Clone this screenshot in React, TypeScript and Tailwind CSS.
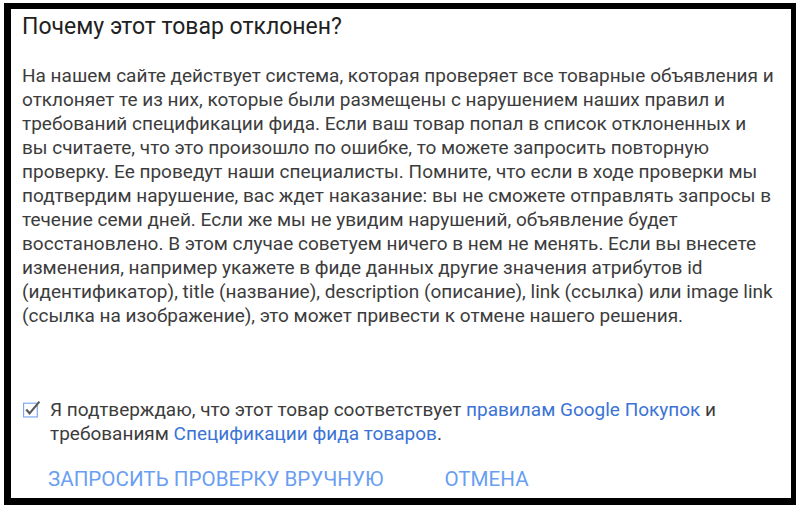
import React from 'react'

const paragraph =
  'На нашем сайте действует система, которая проверяет все товарные объявления и отклоняет те из них, которые были размещены с нарушением наших правил и требований спецификации фида. Если ваш товар попал в список отклоненных и вы считаете, что это произошло по ошибке, то можете запросить повторную проверку. Ее проведут наши специалисты. Помните, что если в ходе проверки мы подтвердим нарушение, вас ждет наказание: вы не сможете отправлять запросы в течение семи дней. Если же мы не увидим нарушений, объявление будет восстановлено. В этом случае советуем ничего в нем не менять. Если вы внесете изменения, например укажете в фиде данных другие значения атрибутов id (идентификатор), title (название), description (описание), link (ссылка) или image link (ссылка на изображение), это может привести к отмене нашего решения.'

// box with a check that pokes out of its top-right corner
function CheckIcon() {
  return (
    <svg viewBox="0 0 18 18" className="w-[19px] h-[19px] shrink-0">
      <rect x="1.5" y="4" width="13" height="13" fill="white" stroke="#7aa7f0" strokeWidth="1.1" />
      <path d="M4 10l3.2 3.6L16.5 2.5" fill="none" stroke="#5a5a5a" strokeWidth="2.1" />
    </svg>
  )
}

export default function App() {
  const [checked, setChecked] = React.useState(true)

  return (
    <div className="w-[800px] h-[509px] bg-white pt-[3px] pl-[4px] pr-[4px] pb-[4px] font-['Roboto',sans-serif]">
      <div className="h-full border-l-[7px] border-t-[6px] border-r-[5px] border-b-[7px] border-black bg-white pl-[11px] pr-[16px] flex flex-col">
        <h2 className="text-[23px] leading-[28px] text-[#212121] mt-[4px]">Почему этот товар отклонен?</h2>

        <p className="mt-[23px] text-[19px] leading-[24px] text-[#3c3c3c]">{paragraph}</p>

        <label
          className="mt-[70px] flex items-start gap-[9px] text-[19px] leading-[24px] text-[#3c3c3c] cursor-pointer"
          onClick={() => setChecked(!checked)}
        >
          <span className="mt-[1px]">{checked ? <CheckIcon /> : <span className="block w-[19px] h-[19px]" />}</span>
          <span>
            Я подтверждаю, что этот товар соответствует{' '}
            <a className="text-[#3b73d6]">правилам Google Покупок</a> и
            <br />
            требованиям <a className="text-[#3b73d6]">Спецификации фида товаров</a>.
          </span>
        </label>

        <div className="mt-[21px] flex gap-[61px] pl-[26px] text-[20.6px] leading-[24px] text-[#6a9ef2]">
          <button className="uppercase">Запросить проверку вручную</button>
          <button className="uppercase">Отмена</button>
        </div>
      </div>
    </div>
  )
}
